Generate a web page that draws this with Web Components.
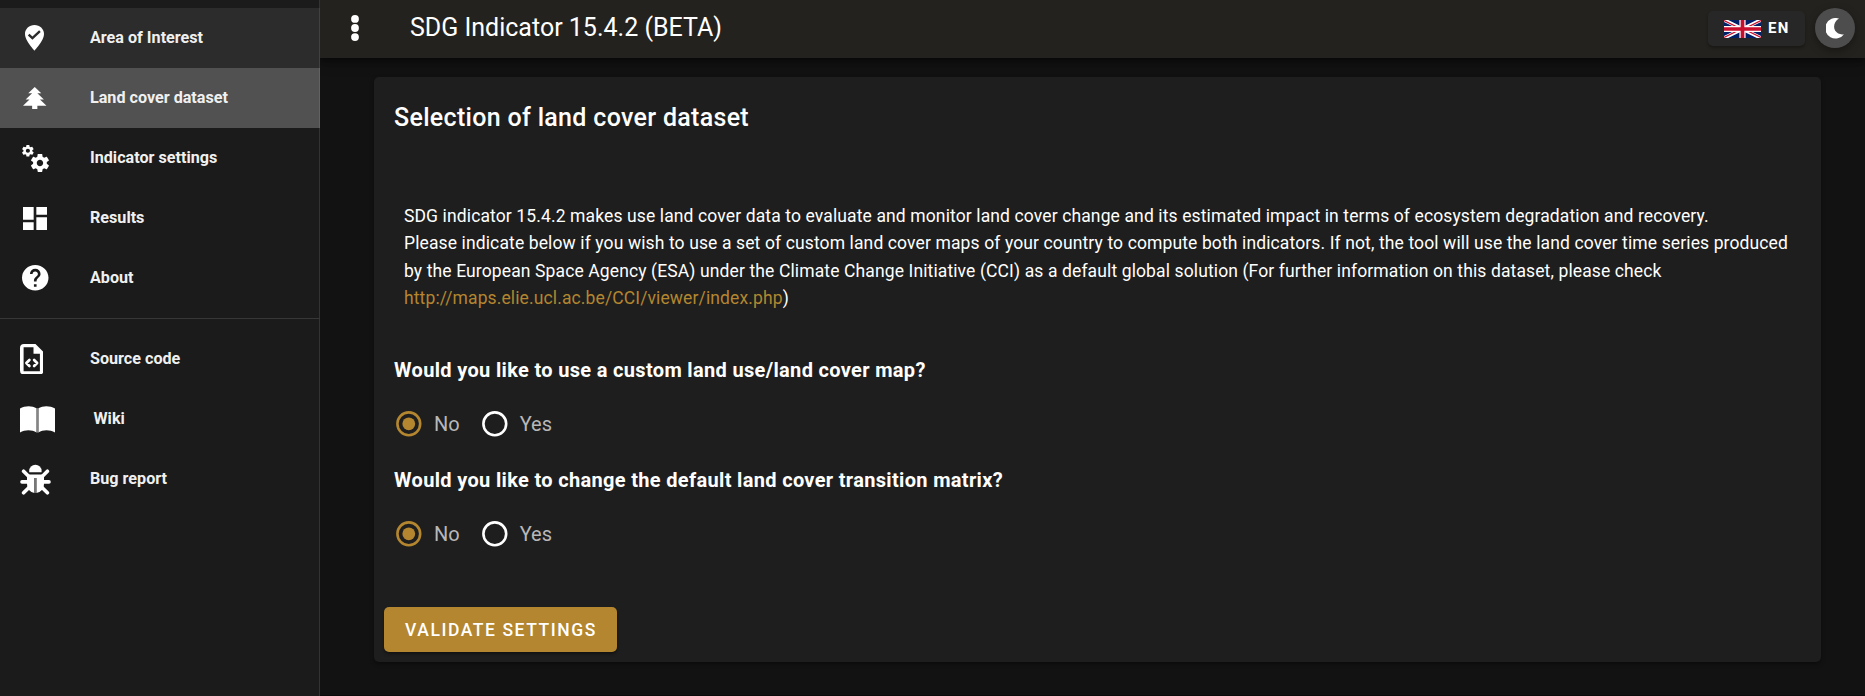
<!DOCTYPE html>
<html lang="en">
<head>
<meta charset="utf-8">
<title>SDG Indicator 15.4.2 (BETA)</title>
<style>
html, body { margin: 0; height: 100%; overflow: hidden; background: #121212; color: #fff; font-family: Roboto, sans-serif; }
</style>
</head>
<body>
<sdg-app></sdg-app>
<script>
const define = (name, html) => {
  const template = document.createElement('template');
  template.innerHTML = html;
  customElements.define(name, class extends HTMLElement {
    constructor() {
      super();
      this.attachShadow({ mode: 'open' }).append(template.content.cloneNode(true));
    }
  });
};

/* Icon glyphs: [drawn width, drawn height, viewBox, markup] */
const ICONS = {
  marker: [19, 25.5, '5 2 14 20', '<path fill-rule="evenodd" d="M12 2C15.86 2 19 5.13 19 9C19 14.25 12 22 12 22S5 14.25 5 9C5 5.13 8.14 2 12 2M10.47 13.6L16.6 7.5L15.4 6.2L10.47 11.1L8.3 8.9L7.1 10.2Z"/>'],
  tree: [23.5, 22.5, '3 3 18 18', '<path d="M10,21V18H3L8,13H5L10,8H7L12,3L17,8H14L19,13H16L21,18H14V21H10Z"/>'],
  cogs: [27, 27, '2.2 2 20.6 21', '<path d="M15.9,18.45C17.25,18.45 18.35,17.35 18.35,16C18.35,14.65 17.25,13.55 15.9,13.55C14.54,13.55 13.45,14.65 13.45,16C13.45,17.35 14.54,18.45 15.9,18.45M21.1,16.68L22.58,17.84C22.71,17.95 22.75,18.13 22.66,18.29L21.26,20.71C21.17,20.86 21,20.92 20.83,20.86L19.09,20.16C18.73,20.44 18.33,20.67 17.91,20.85L17.64,22.7C17.62,22.87 17.47,23 17.3,23H14.5C14.32,23 14.18,22.87 14.15,22.7L13.89,20.85C13.46,20.67 13.07,20.44 12.71,20.16L10.96,20.86C10.81,20.92 10.62,20.86 10.54,20.71L9.14,18.29C9.05,18.13 9.09,17.95 9.22,17.84L10.7,16.68L10.65,16L10.7,15.31L9.22,14.16C9.09,14.05 9.05,13.86 9.14,13.71L10.54,11.29C10.62,11.13 10.81,11.07 10.96,11.13L12.71,11.84C13.07,11.56 13.46,11.32 13.89,11.15L14.15,9.29C14.18,9.13 14.32,9 14.5,9H17.3C17.47,9 17.62,9.13 17.64,9.29L17.91,11.15C18.33,11.32 18.73,11.56 19.09,11.84L20.83,11.13C21,11.07 21.17,11.13 21.26,11.29L22.66,13.71C22.75,13.86 22.71,14.05 22.58,14.16L21.1,15.31L21.15,16L21.1,16.68M6.69,8.07C7.56,8.07 8.26,7.37 8.26,6.5C8.26,5.63 7.56,4.92 6.69,4.92A1.58,1.58 0 0,0 5.11,6.5C5.11,7.37 5.82,8.07 6.69,8.07M10.03,6.94L11,7.68C11.07,7.75 11.09,7.87 11.03,7.97L10.13,9.53C10.08,9.63 9.96,9.67 9.86,9.63L8.74,9.18L8,9.62L7.81,10.81C7.79,10.92 7.7,11 7.59,11H5.79C5.67,11 5.58,10.92 5.56,10.81L5.4,9.62L4.64,9.18L3.52,9.63C3.41,9.67 3.3,9.63 3.24,9.53L2.34,7.97C2.28,7.87 2.31,7.75 2.39,7.68L3.34,6.94L3.31,6.5L3.34,6.06L2.39,5.32C2.31,5.25 2.28,5.13 2.34,5.03L3.24,3.47C3.3,3.37 3.41,3.33 3.52,3.37L4.63,3.82L5.4,3.38L5.56,2.19C5.58,2.08 5.67,2 5.79,2H7.59C7.7,2 7.79,2.08 7.81,2.19L8,3.38L8.74,3.82L9.86,3.37C9.96,3.33 10.08,3.37 10.13,3.47L11.03,5.03C11.09,5.13 11.07,5.25 11,5.32L10.03,6.06L10.06,6.5L10.03,6.94Z"/>'],
  dashboard: [24, 23, '3 3 18 18', '<path d="M13,3V9H21V3M13,21H21V11H13M3,21H11V15H3M3,13H11V3H3V13Z"/>'],
  help: [26.5, 25.5, '2 2 20 20', '<path d="M15.07,11.25L14.17,12.17C13.45,12.89 13,13.5 13,15H11V14.5C11,13.39 11.45,12.39 12.17,11.67L13.41,10.41C13.78,10.05 14,9.55 14,9C14,7.89 13.1,7 12,7A2,2 0 0,0 10,9H8A4,4 0 0,1 12,5A4,4 0 0,1 16,9C16,9.88 15.64,10.67 15.07,11.25M13,19H11V17H13M12,2A10,10 0 0,0 2,12A10,10 0 0,0 12,22A10,10 0 0,0 22,12C22,6.47 17.5,2 12,2Z"/>'],
  source: [23.5, 30.5, '0 0 23.5 30.5', '<path fill-rule="evenodd" d="M4 0H15.5L23.5 8V26.5A4 4 0 0 1 19.5 30.5H4A4 4 0 0 1 0 26.5V4A4 4 0 0 1 4 0ZM3.6 3.2V27.3H19.9V9.8H13.5V3.2Z"/><path fill="none" stroke="#fff" stroke-width="2.7" stroke-linecap="round" stroke-linejoin="round" d="M9.4 16L6.4 19L9.4 22M14.1 16L17.1 19L14.1 22"/>'],
  book: [35, 27, '0 0 35 27', '<path d="M0 2.5C5 -.6 12-.6 16.6 2.2V26.6C12 23.6 5 23.6 0 26.6Z"/><path d="M18.4 2.2C23-.6 30-.6 35 2.5V26.6C30 23.6 23 23.6 18.4 26.6Z"/><path d="M16.6 2.2H18.4V26.6H16.6Z" fill="#858585"/>'],
  bug: [31, 31, '0 0 31 31', '<path d="M9.2 8.2V7A6.2 6.2 0 0 1 21.6 7V8.2Z"/><path d="M9 10.4H22A3 3 0 0 1 24 13V20A8.6 8.6 0 0 1 16.4 28.9V14H14.4V28.9A8.6 8.6 0 0 1 7 20V13A3 3 0 0 1 9 10.4Z"/><path d="M14.4 14H16.4V28.9H14.4Z" fill="#777"/><path fill="none" stroke="#fff" stroke-width="3.6" stroke-linecap="round" d="M3.6 7.2L8.6 12.2M27.4 7.2L22.4 12.2M2 17.9H8M29 17.9H23M3.6 28.8L9 23.4M27.4 28.8L22 23.4"/>'],
  dots: [8, 26, '0 0 8 26', '<circle cx="4" cy="3.9" r="3.9"/><circle cx="4" cy="13" r="3.9"/><circle cx="4" cy="22.1" r="3.9"/>'],
  moon: [18, 21, '0 0 18 21', '<path d="M13 .6A10.3 10.3 0 1 0 18 16.2A9 9 0 0 1 9.2 12.8C6.7 8.5 8.6 3.2 13 .6Z"/>'],
  flag: [37, 18, '0 0 60 30', '<path fill="#012169" d="M0 0H60V30H0Z"/><path stroke="#fff" stroke-width="6" d="M0 0L60 30M60 0L0 30"/><path stroke="#c8102e" stroke-width="2.3" d="M0 1L28 15M60 29L32 15M60 1L32 15M0 29L28 15"/><path stroke="#fff" stroke-width="10" d="M30 0V30M0 15H60"/><path stroke="#c8102e" stroke-width="6" d="M30 0V30M0 15H60"/>']
};

customElements.define('ui-icon', class extends HTMLElement {
  constructor() { super(); this.attachShadow({ mode: 'open' }); }
  connectedCallback() {
    const [w, h, box, art] = ICONS[this.getAttribute('name')];
    this.shadowRoot.innerHTML = `<style>:host{display:block;flex:none;line-height:0}svg{display:block;fill:#fff}</style>
      <svg width="${w}" height="${h}" viewBox="${box}" preserveAspectRatio="none">${art}</svg>`;
  }
});

define('nav-item', `
<style>
:host { display: flex; align-items: center; height: 60px; box-sizing: border-box; font-weight: 700; font-size: 16.15px; line-height: 20px; color: #f0f0f0; box-shadow: inset -1px 0 rgba(255,255,255,.1); }
:host([hover]) { background: #2c2c2c; }
:host([active]) { background: #515151; }
.icon { width: 90px; flex: none; box-sizing: border-box; padding-left: var(--inset, 22px); }
.label { padding-left: var(--shift, 0); }
</style>
<div class="icon"><slot name="icon"></slot></div><div class="label"><slot></slot></div>`);

define('side-nav', `
<style>
:host { display: block; position: relative; z-index: 1; width: 320px; flex: none; box-sizing: border-box; padding-top: 8px; background: linear-gradient(to left, #333 1px, #1b1b1b 1px); }
nav-item:not([hover]):not([active]) { box-shadow: none; }
hr { margin: 10px 0; border: 0; border-top: 1px solid #373737; }
</style>
<nav>
<nav-item hover style="--inset:25px"><ui-icon slot="icon" name="marker"></ui-icon>Area of Interest</nav-item>
<nav-item active style="--inset:23px"><ui-icon slot="icon" name="tree"></ui-icon>Land cover dataset</nav-item>
<nav-item><ui-icon slot="icon" name="cogs"></ui-icon>Indicator settings</nav-item>
<nav-item style="--inset:23px"><ui-icon slot="icon" name="dashboard"></ui-icon>Results</nav-item>
<nav-item><ui-icon slot="icon" name="help"></ui-icon>About</nav-item>
<hr>
<nav-item style="--inset:19.5px"><ui-icon slot="icon" name="source"></ui-icon>Source code</nav-item>
<nav-item style="--inset:19.5px;--shift:3.5px"><ui-icon slot="icon" name="book"></ui-icon>Wiki</nav-item>
<nav-item style="--inset:19.5px"><ui-icon slot="icon" name="bug"></ui-icon>Bug report</nav-item>
</nav>`);

define('app-bar', `
<style>
:host { display: flex; align-items: center; height: 58px; box-sizing: border-box; padding: 0 10px 2px 31px; background: #24221e; box-shadow: 0 3px 5px rgba(0,0,0,.35), 0 5px 12px rgba(0,0,0,.25); position: relative; }
h1 { margin: 0 auto 0 51px; font-weight: 400; font-size: 25px; line-height: 30px; }
button { font: inherit; color: #fff; border: 0; padding: 0; display: flex; align-items: center; }
.lang { width: 97px; height: 35px; margin: 1px 10px 0 0; padding-left: 16px; gap: 7px; border-radius: 5px; background: #272727; font-weight: 700; font-size: 15px; letter-spacing: 1.34px; box-shadow: 0 2px 3px rgba(0,0,0,.3); }
.lang span { position: relative; top: -1px; }
.theme { width: 40px; height: 40px; justify-content: center; border-radius: 50%; background: #4d4d4d; box-shadow: 0 3px 8px rgba(0,0,0,.35); }
</style>
<ui-icon name="dots"></ui-icon>
<h1>SDG Indicator 15.4.2 (BETA)</h1>
<button class="lang"><ui-icon name="flag"></ui-icon><span>EN</span></button>
<button class="theme"><ui-icon name="moon"></ui-icon></button>`);

define('radio-option', `
<style>
:host { display: flex; align-items: center; height: 30px; font-size: 20px; color: #b8b8b8; --tone: #fff; }
:host([checked]) { --tone: #b3862f; }
svg { margin-right: 12px; fill: none; stroke: var(--tone); stroke-width: 2.6; }
.dot { display: none; stroke: none; fill: var(--tone); }
:host([checked]) .dot { display: inline; }
</style>
<svg width="26" height="26" viewBox="0 0 26 26"><circle cx="12.8" cy="12.8" r="11.4"/><circle class="dot" cx="12.8" cy="12.8" r="6.4"/></svg><span><slot></slot></span>`);

define('radio-question', `
<style>
:host { display: block; height: 110px; }
h3 { margin: 0; font-weight: 700; font-size: 20px; line-height: 30px; letter-spacing: .33px; }
div { display: flex; gap: 22px; padding: 24px 0 0 2px; }
</style>
<h3><slot></slot></h3>
<div><radio-option checked>No</radio-option><radio-option>Yes</radio-option></div>`);

define('settings-card', `
<style>
:host { display: flex; flex-direction: column; align-items: flex-start; width: 1447px; height: 585px; box-sizing: border-box; padding: 21px 20px 10px; border-radius: 5px; background: #1e1e1e; box-shadow: 0 2px 4px rgba(0,0,0,.4); }
h2 { margin: 0 0 64.5px; font-weight: 500; font-size: 25px; line-height: 40px; letter-spacing: .3125px; }
p { margin: 0 0 42.5px 10px; width: 1400px; font-size: 17.5px; line-height: 27.5px; letter-spacing: .12px; }
a { color: #b3862f; text-decoration: none; }
button { margin: auto 0 0 -10px; width: 233px; height: 45px; flex: none; border: 0; border-radius: 5px; padding: 0 0 0 1px; background: #b3862f; color: #fff; font: 500 17.5px Roboto, sans-serif; letter-spacing: 1.5625px; box-shadow: 0 2px 3px rgba(0,0,0,.4); }
</style>
<h2>Selection of land cover dataset</h2>
<p>SDG indicator 15.4.2 makes use land cover data to evaluate and monitor land cover change and its estimated impact in terms of ecosystem degradation and recovery.<br>
Please indicate below if you wish to use a set of custom land cover maps of your country to compute both indicators. If not, the tool will use the land cover time series produced by the European Space Agency (ESA) under the Climate Change Initiative (CCI) as a default global solution (For further information on this dataset, please check <a>http://maps.elie.ucl.ac.be/CCI/viewer/index.php</a>)</p>
<radio-question>Would you like to use a custom land use/land cover map?</radio-question>
<radio-question>Would you like to change the default land cover transition matrix?</radio-question>
<button>VALIDATE SETTINGS</button>`);

define('sdg-app', `
<style>
:host { display: flex; height: 100vh; }
main { flex: 1; min-width: 0; box-sizing: border-box; border-bottom: 1px solid #0d0a0b; }
settings-card { margin: 19px 0 0 54px; }
</style>
<side-nav></side-nav>
<main><app-bar></app-bar><settings-card></settings-card></main>`);
</script>
</body>
</html>
